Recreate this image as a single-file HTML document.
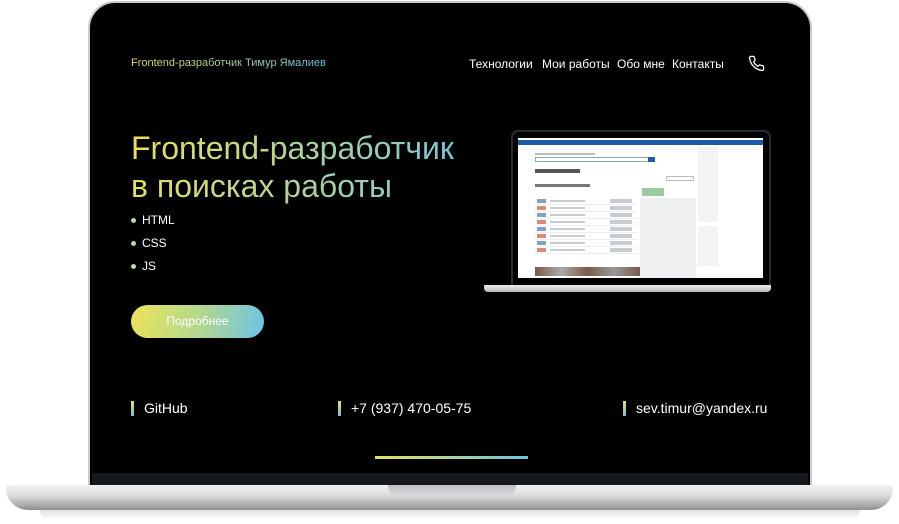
<!DOCTYPE html>
<html><head><meta charset="utf-8"><style>
*{margin:0;padding:0;box-sizing:border-box}
body{width:899px;height:524px;background:#fff;position:relative;overflow:hidden;font-family:"Liberation Sans",sans-serif}
.abs{position:absolute}
.grad{background:linear-gradient(90deg,#e8e15a,#6cc3e6);-webkit-background-clip:text;background-clip:text;color:transparent}
.nav span{position:absolute;top:57px;color:#fff;font-size:12px}
.li{position:absolute;left:131px;color:#fff;font-size:12px}
.li:before{content:"";position:absolute;left:0;top:5px;width:5px;height:5px;border-radius:50%;background:#b7dca0}
.li span{margin-left:11px}
.ct{position:absolute;top:400px;color:#fff;font-size:14px;padding-left:13px}
.ct:before{content:"";position:absolute;left:0;top:1px;width:3px;height:15px;background:linear-gradient(#e8e15a,#6cc3e6)}
.row{position:absolute;left:535px;width:102px;height:7px;border-bottom:1px solid #eee}
.row i{position:absolute;left:2px;top:1px;width:9px;height:4px}
.row b{position:absolute;left:15px;top:2px;width:35px;height:2px;background:#c6ccd4}
.row em{position:absolute;left:75px;top:1px;width:22px;height:4px;background:#c6ccd4}
</style></head><body>
<div class="abs" style="left:88px;top:1px;width:724px;height:488px;border-radius:27px 27px 0 0;background:#c9cacc"></div>
<div class="abs" style="left:90px;top:3px;width:720px;height:486px;border-radius:25px 25px 0 0;background:#000"></div>
<div class="abs" style="left:92px;top:473px;width:716px;height:13px;background:#15181c"></div>
<div class="abs" style="left:6px;top:485px;width:887px;height:25px;border-radius:3px 3px 22px 22px;background:linear-gradient(#f2f2f3,#d8d9db 45%,#a9abae 80%,#8c8e91)"></div>
<div class="abs" style="left:388px;top:485px;width:128px;height:11px;border-radius:0 0 10px 10px;background:linear-gradient(#bfc0c2,#d9dadc)"></div>
<div class="abs" style="left:40px;top:510px;width:820px;height:10px;background:linear-gradient(rgba(0,0,0,.12),rgba(0,0,0,0));border-radius:0 0 40px 40px"></div>

<div class="abs grad" style="left:131px;top:57px;font-size:11px">Frontend-разработчик Тимур Ямалиев</div>
<div class="nav"><span style="left:469px">Технологии</span><span style="left:542px">Мои работы</span><span style="left:617px">Обо мне</span><span style="left:672px">Контакты</span></div>
<svg class="abs" style="left:748px;top:55px" width="17" height="17" viewBox="0 0 24 24" fill="none" stroke="#fff" stroke-width="1.8" stroke-linejoin="round"><path d="M22 16.9v3a2 2 0 0 1-2.2 2 19.8 19.8 0 0 1-8.6-3.1 19.5 19.5 0 0 1-6-6A19.8 19.8 0 0 1 2.1 4.2 2 2 0 0 1 4.1 2h3a2 2 0 0 1 2 1.7c.1 1 .4 1.9.7 2.8a2 2 0 0 1-.5 2.1L8 9.9a16 16 0 0 0 6 6l1.3-1.3a2 2 0 0 1 2.1-.4c.9.3 1.8.6 2.8.7a2 2 0 0 1 1.7 2z"/></svg>

<div class="abs grad" style="left:131px;top:129px;font-size:32px;line-height:38px;width:360px">Frontend-разработчик<br>в поисках работы</div>
<div class="li" style="top:213px"><span>HTML</span></div>
<div class="li" style="top:236px"><span>CSS</span></div>
<div class="li" style="top:259px"><span>JS</span></div>
<div class="abs" style="left:131px;top:305px;width:133px;height:33px;border-radius:17px;background:linear-gradient(100deg,#ece35a,#b5d88c 50%,#6cc3e6);color:#fff;font-size:12px;text-align:center;line-height:33px">Подробнее</div>

<div class="abs" style="left:511px;top:130px;width:260px;height:157px;border-radius:7px 7px 0 0;background:#2a2b2e"></div>
<div class="abs" style="left:513px;top:132px;width:256px;height:155px;border-radius:6px 6px 0 0;background:#000"></div>
<div class="abs" style="left:518px;top:138px;width:245px;height:140px;background:#fff;overflow:hidden">
 <div class="abs" style="left:0;top:2px;width:245px;height:5px;background:#1d5aa8"></div>
 <div class="abs" style="left:17px;top:15px;width:60px;height:2px;background:#bbb"></div>
 <div class="abs" style="left:17px;top:19px;width:120px;height:5px;border:1px solid #8aa"></div>
 <div class="abs" style="left:130px;top:19px;width:7px;height:5px;background:#1d5aa8"></div>
 <div class="abs" style="left:17px;top:31px;width:45px;height:4px;background:#555"></div>
 <div class="abs" style="left:17px;top:46px;width:55px;height:3px;background:#777"></div>
 <div class="abs" style="left:180px;top:9px;width:20px;height:75px;background:#f3f3f3"></div>
 <div class="abs" style="left:180px;top:88px;width:20px;height:40px;background:#f3f3f3"></div>
 <div class="abs" style="left:148px;top:38px;width:28px;height:5px;border:1px solid #bbb"></div>
 <div class="abs" style="left:124px;top:50px;width:22px;height:8px;background:#9bc9a0"></div>
 <div class="abs" style="left:122px;top:60px;width:56px;height:80px;background:#eeeff0"></div>
</div>
<div class="row" style="top:198px"><i style="background:#7da3c8"></i><b></b><em></em></div>
<div class="row" style="top:205px"><i style="background:#d98b7a"></i><b></b><em></em></div>
<div class="row" style="top:212px"><i style="background:#7da3c8"></i><b></b><em></em></div>
<div class="row" style="top:219px"><i style="background:#d98b7a"></i><b></b><em></em></div>
<div class="row" style="top:226px"><i style="background:#7da3c8"></i><b></b><em></em></div>
<div class="row" style="top:233px"><i style="background:#d98b7a"></i><b></b><em></em></div>
<div class="row" style="top:240px"><i style="background:#7da3c8"></i><b></b><em></em></div>
<div class="row" style="top:247px"><i style="background:#d98b7a"></i><b></b><em></em></div>
<div class="abs" style="left:535px;top:267px;width:105px;height:9px;background:linear-gradient(90deg,#7a5a4a,#aaa,#7a5a4a,#999,#7a5a4a)"></div>
<div class="abs" style="left:484px;top:285px;width:287px;height:7px;border-radius:1px 1px 4px 4px;background:linear-gradient(#eee,#b8b9bb)"></div>

<div class="ct" style="left:131px">GitHub</div>
<div class="ct" style="left:338px">+7 (937) 470-05-75</div>
<div class="ct" style="left:623px">sev.timur@yandex.ru</div>
<div class="abs" style="left:375px;top:456px;width:153px;height:3px;background:linear-gradient(90deg,#e8e15a,#6cc3e6)"></div>
</body></html>
